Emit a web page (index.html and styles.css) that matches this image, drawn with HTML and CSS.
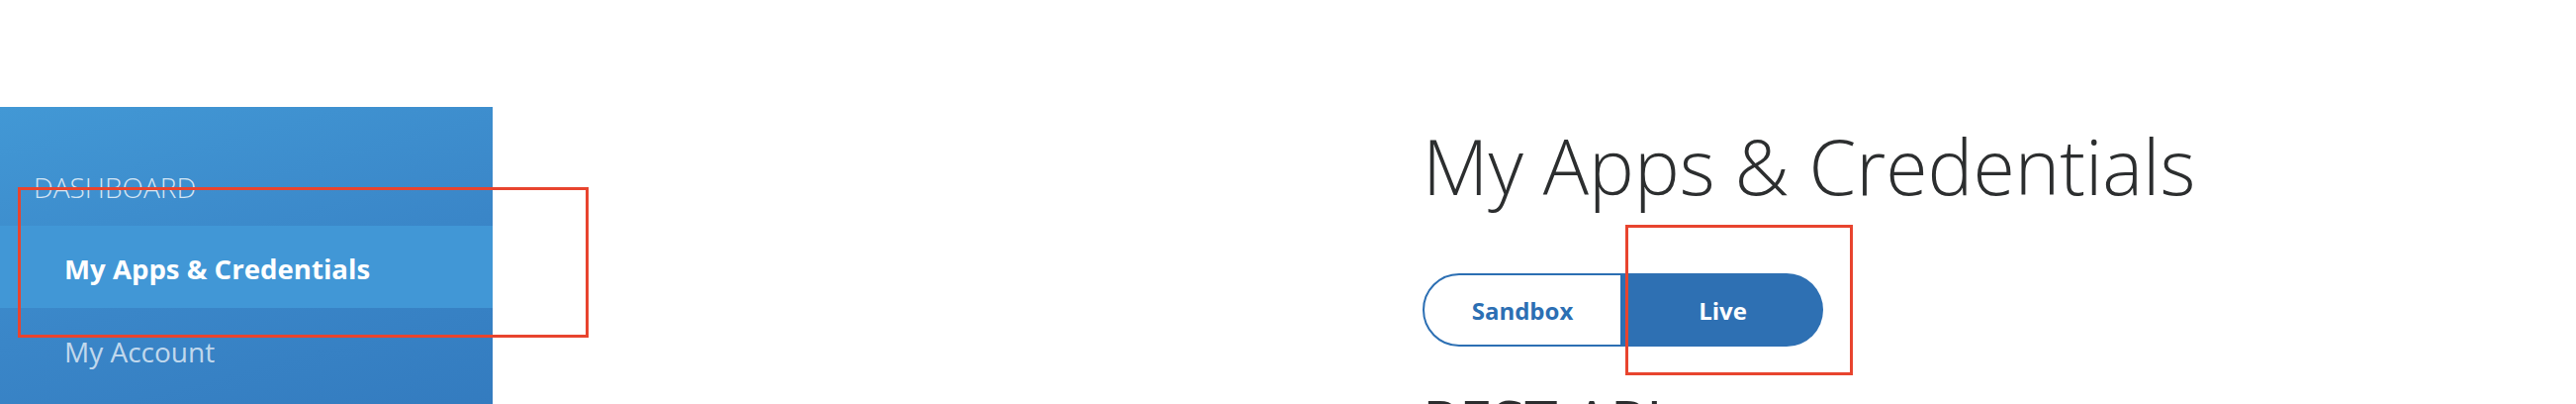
FILE: index.html
```html
<!DOCTYPE html>
<html lang="en">
<head>
<meta charset="utf-8">
<title>My Apps &amp; Credentials</title>
<link rel="stylesheet" href="styles.css">
</head>
<body>
<div class="page">
  <nav class="sidebar">
    <div class="nav-heading">DASHBOARD</div>
    <a class="nav-item active" href="#">My Apps &amp; Credentials</a>
    <a class="nav-item" href="#">My Account</a>
  </nav>
  <main class="main">
    <h1 class="title">My Apps &amp; Credentials</h1>
    <div class="toggle">
      <button class="toggle-btn sandbox">Sandbox</button>
      <button class="toggle-btn live">Live</button>
    </div>
    <h2 class="section-title">REST API apps</h2>
  </main>
</div>
<div class="mark mark-nav"></div>
<div class="mark mark-live"></div>
</body>
</html>
```
FILE: styles.css
```css
html, body {
  margin: 0;
  padding: 0;
  background: #ffffff;
}
body {
  width: 2604px;
  height: 408px;
  overflow: hidden;
  position: relative;
  font-family: "Open Sans", "Noto Sans", sans-serif;
}
.page {
  display: flex;
  padding-top: 108px;
  height: 300px;
}
.sidebar {
  width: 498px;
  flex: none;
  height: 400px;
  background: linear-gradient(165deg, #4298d5 0%, #3a86c8 45%, #3076bb 100%);
  padding-top: 61px;
  box-sizing: border-box;
  display: flex;
  flex-direction: column;
}
.nav-heading {
  font-size: 28px;
  line-height: 40px;
  font-weight: 300;
  color: rgba(255, 255, 255, 0.78);
  padding-left: 34px;
  margin-bottom: 19px;
}
.nav-item {
  display: block;
  font-size: 28px;
  line-height: 40px;
  padding: 0 0 0 65px;
  color: rgba(255, 255, 255, 0.7);
  text-decoration: none;
}
.nav-item.active {
  background: #4197d6;
  color: #ffffff;
  font-weight: 700;
  font-size: 27.6px;
  padding-top: 23px;
  padding-bottom: 20px;
  margin-bottom: 24px;
}
.main {
  padding-left: 940px;
  padding-top: 15px;
}
.title {
  margin: 0;
  font-size: 77px;
  line-height: 90px;
  font-weight: 300;
  color: #2c2e2f;
  white-space: nowrap;
}
.toggle {
  display: flex;
  margin-top: 63px;
}
.toggle-btn {
  width: 202px;
  height: 74px;
  font-family: "Open Sans", "Noto Sans", sans-serif;
  font-size: 24px;
  font-weight: 700;
  box-sizing: border-box;
  padding: 0;
  cursor: pointer;
}
.toggle-btn.sandbox {
  background: #ffffff;
  color: #2c6fb3;
  border: 2px solid #2c6fb3;
  border-radius: 37px 0 0 37px;
}
.toggle-btn.live {
  width: 203px;
  background: #2e70b3;
  color: #ffffff;
  border: none;
  border-radius: 0 37px 37px 0;
}
.section-title {
  margin: 40px 0 0 0;
  font-size: 60px;
  line-height: 70px;
  font-weight: 400;
  color: #2c2e2f;
  white-space: nowrap;
}
.mark {
  position: absolute;
  border: 3px solid #e8442e;
  box-sizing: border-box;
  pointer-events: none;
}
.mark-nav {
  left: 18px;
  top: 189px;
  width: 577px;
  height: 152px;
}
.mark-live {
  left: 1643px;
  top: 227px;
  width: 230px;
  height: 152px;
}
```
